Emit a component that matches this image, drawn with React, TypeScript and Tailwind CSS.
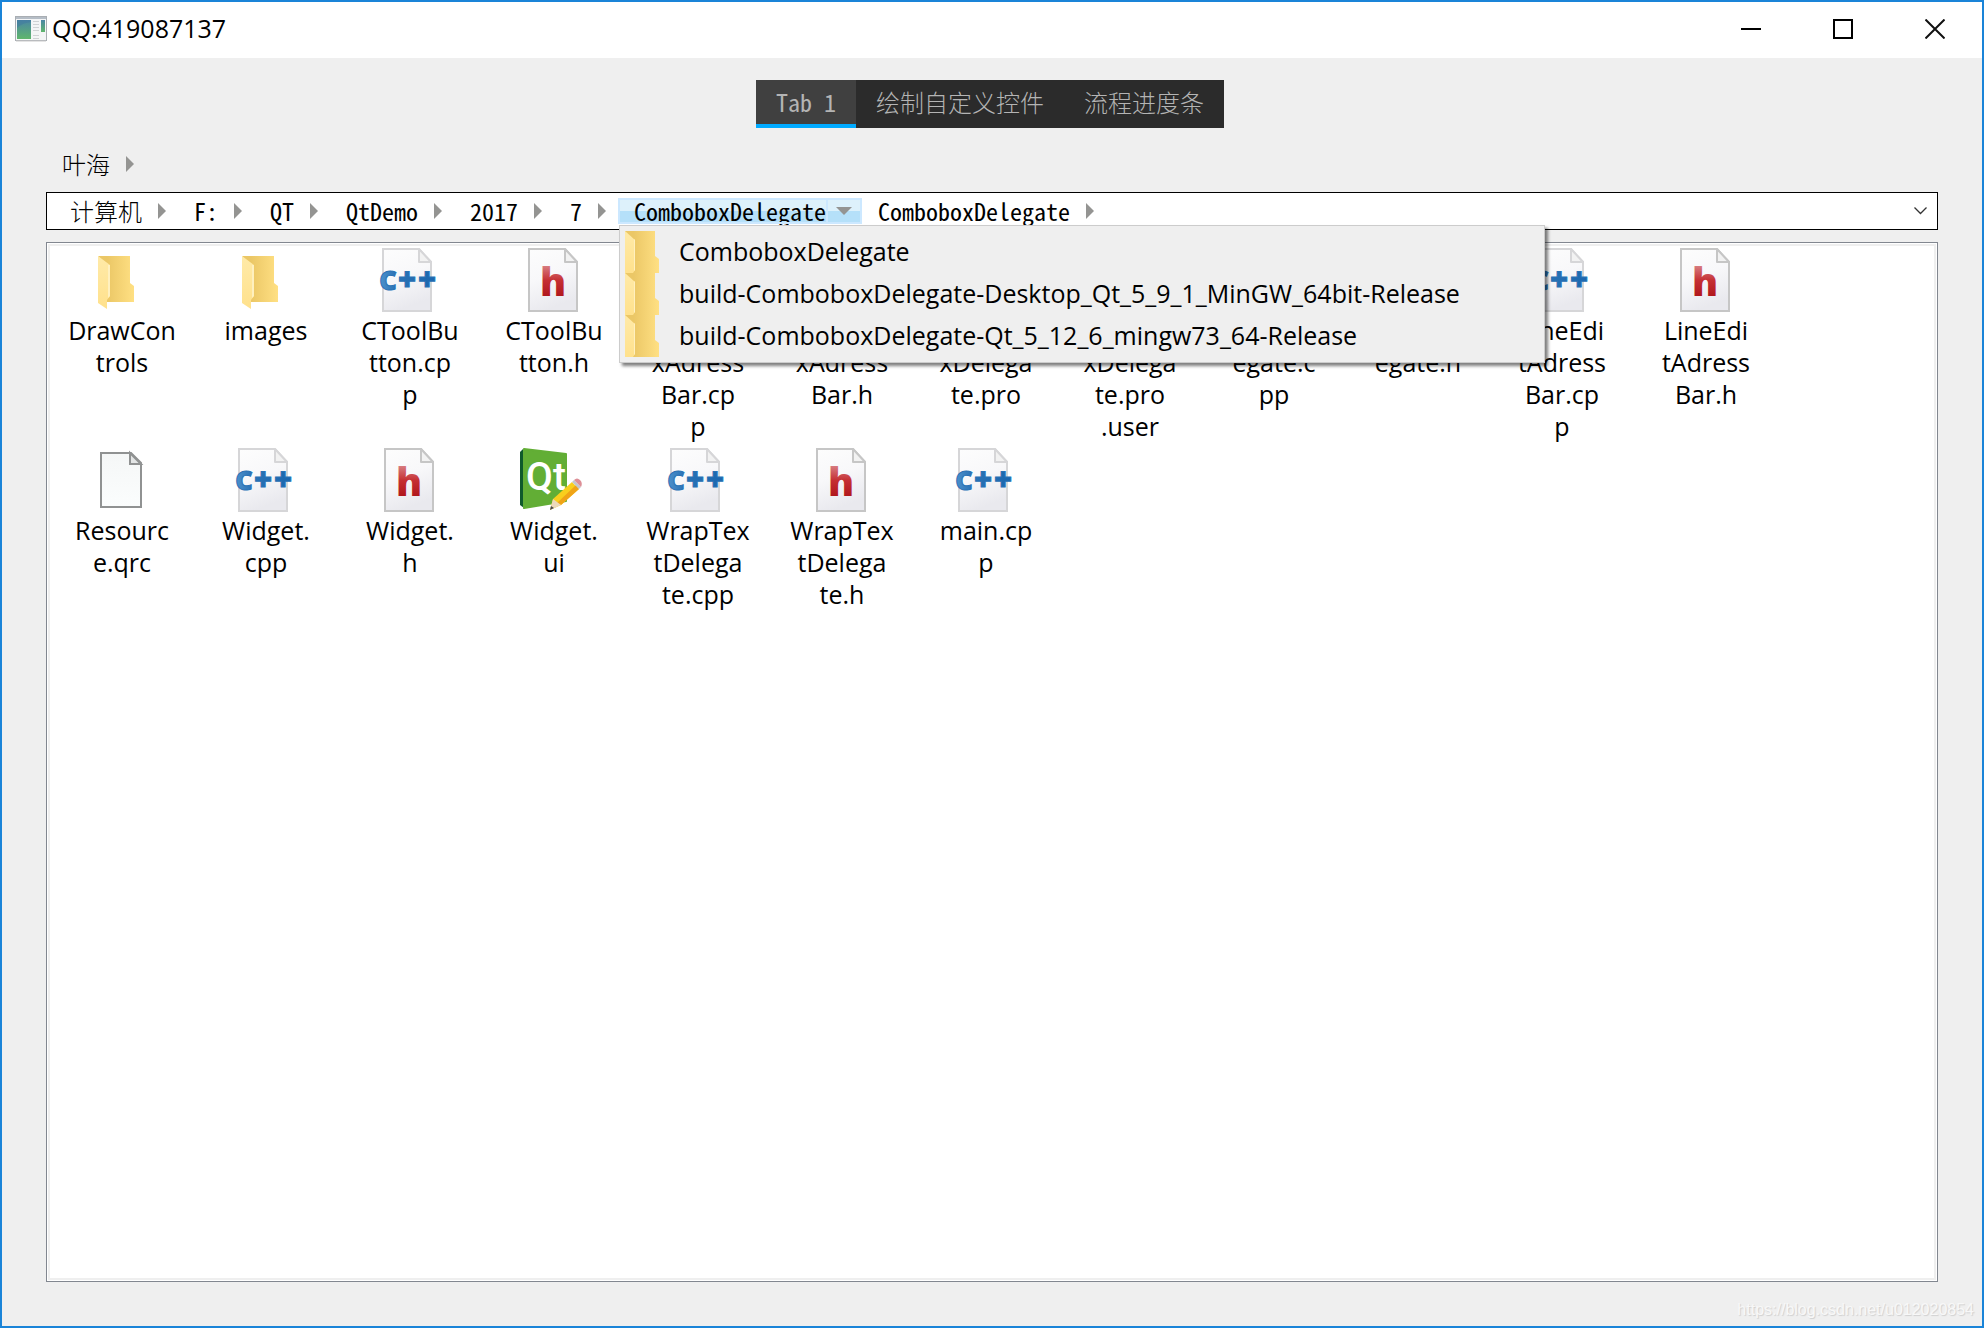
import React, { useState } from 'react';

type FileKind = 'folder' | 'cpp' | 'header' | 'blank' | 'ui';

interface FileEntry {
  kind: FileKind;
  lines: string[];
}

const tabs = ['Tab 1', '绘制自定义控件', '流程进度条'];

const crumbs = ['计算机', 'F:', 'QT', 'QtDemo', '2017', '7', 'ComboboxDelegate', 'ComboboxDelegate'];

const menuItems = [
  'ComboboxDelegate',
  'build-ComboboxDelegate-Desktop_Qt_5_9_1_MinGW_64bit-Release',
  'build-ComboboxDelegate-Qt_5_12_6_mingw73_64-Release',
];

const files: FileEntry[] = [
  { kind: 'folder', lines: ['DrawCon', 'trols'] },
  { kind: 'folder', lines: ['images'] },
  { kind: 'cpp', lines: ['CToolBu', 'tton.cp', 'p'] },
  { kind: 'header', lines: ['CToolBu', 'tton.h'] },
  { kind: 'cpp', lines: ['Combobo', 'xAdress', 'Bar.cp', 'p'] },
  { kind: 'header', lines: ['Combobo', 'xAdress', 'Bar.h'] },
  { kind: 'blank', lines: ['Combobo', 'xDelega', 'te.pro'] },
  { kind: 'blank', lines: ['Combobo', 'xDelega', 'te.pro', '.user'] },
  { kind: 'cpp', lines: ['ItemDel', 'egate.c', 'pp'] },
  { kind: 'header', lines: ['ItemDel', 'egate.h'] },
  { kind: 'cpp', lines: ['LineEdi', 'tAdress', 'Bar.cp', 'p'] },
  { kind: 'header', lines: ['LineEdi', 'tAdress', 'Bar.h'] },
  { kind: 'blank', lines: ['Resourc', 'e.qrc'] },
  { kind: 'cpp', lines: ['Widget.', 'cpp'] },
  { kind: 'header', lines: ['Widget.', 'h'] },
  { kind: 'ui', lines: ['Widget.', 'ui'] },
  { kind: 'cpp', lines: ['WrapTex', 'tDelega', 'te.cpp'] },
  { kind: 'header', lines: ['WrapTex', 'tDelega', 'te.h'] },
  { kind: 'cpp', lines: ['main.cp', 'p'] },
];

// The mono family has no light weight, so Chinese labels use the regular one
const labelFont = (label: string) =>
  /[\u4e00-\u9fff]/.test(label)
    ? "font-['Noto_Sans_CJK_SC',sans-serif]"
    : "font-['Noto_Sans_Mono_CJK_SC',monospace]";

const Gradients = () => (
  <svg width="0" height="0" className="absolute" aria-hidden="true">
    <defs>
      <linearGradient id="paper" x1="0" y1="0" x2="0.3" y2="1">
        <stop offset="0" stopColor="#fdfdfd" />
        <stop offset="0.5" stopColor="#f8f8fa" />
        <stop offset="1" stopColor="#e9e9ee" />
      </linearGradient>
      <linearGradient id="red" x1="0" y1="0" x2="0" y2="1">
        <stop offset="0.2" stopColor="#d98286" />
        <stop offset="0.5" stopColor="#c52f33" />
        <stop offset="0.9" stopColor="#a90f14" />
      </linearGradient>
      <linearGradient id="blue" x1="0" y1="0" x2="1" y2="0">
        <stop offset="0" stopColor="#4f92cc" />
        <stop offset="0.3" stopColor="#2a72b5" />
        <stop offset="1" stopColor="#1b66ae" />
      </linearGradient>
      <linearGradient id="folderBack" x1="0" y1="0" x2="1" y2="0">
        <stop offset="0.25" stopColor="#ebc766" />
        <stop offset="1" stopColor="#ffe083" />
      </linearGradient>
      <linearGradient id="folderFlap" x1="0" y1="0" x2="0" y2="1">
        <stop offset="0" stopColor="#ffeaa8" />
        <stop offset="1" stopColor="#ffe18c" />
      </linearGradient>
      <linearGradient id="blankPaper" x1="0" y1="0" x2="0" y2="1">
        <stop offset="0" stopColor="#f5f7f7" />
        <stop offset="1" stopColor="#fbfdfd" />
      </linearGradient>
      <linearGradient id="appPane" x1="0" y1="0" x2="0" y2="1">
        <stop offset="0" stopColor="#4a86a5" />
        <stop offset="1" stopColor="#5fb66c" />
      </linearGradient>
    </defs>
  </svg>
);

const AppIcon = () => (
  <svg width="32" height="26" viewBox="0 0 32 26" aria-hidden="true">
    <rect x="0.5" y="0.5" width="31" height="24" fill="#f4f5f6" stroke="#a9aeb3" />
    <path d="M1 2h30" stroke="#b5bdc6" strokeWidth="2" />
    <path d="M1 25h30" stroke="#c9c9c9" strokeWidth="1" />
    <rect x="2" y="4" width="14" height="19" fill="url(#appPane)" />
    <path d="M2 12q5-5 14-6V4H2z" fill="#3f789f" opacity="0.5" />
    <path d="M18 5.500h6M18 8.500h6M18 11.500h6M18 14.500h6M18 19.500h6M18 22.500h6" stroke="#cfd2d4" />
    <rect x="26" y="4" width="4" height="12" fill="url(#appPane)" />
  </svg>
);

const Page = ({ stroke }: { stroke: string }) => (
  <>
    <path d="M7 1h36l12 13v49H7z" fill="url(#paper)" stroke={stroke} strokeWidth="2" />
    <path d="M43 1v13h12z" fill="#f2f2f2" stroke={stroke} strokeWidth="2" strokeLinejoin="round" />
  </>
);

const FileIcon = ({ kind }: { kind: FileKind }) => (
  <svg width="64" height="64" viewBox="0 0 64 64" className="overflow-visible" aria-hidden="true">
    {kind === 'folder' && (
      <>
        <path d="M8 8h32v27l4 3v16H17V20z" fill="url(#folderBack)" />
        <path d="M8 8l12 9v31l-3 4v9l-9-6z" fill="url(#folderFlap)" />
        <path d="M20 17v31l-2 2V17z" fill="#fff0bf" />
      </>
    )}
    {kind === 'cpp' && (
      <g transform="translate(-2 0)" fontWeight="800" fontFamily="Open Sans, sans-serif" textAnchor="middle">
        <Page stroke="#d6d6d8" />
        <text y="42" fill="url(#blue)" stroke="#2a72b5" strokeWidth="1">
          <tspan x="12" fontSize="27">C</tspan>
          <tspan x="31" y="43" fontSize="31">+</tspan>
          <tspan x="51" y="43" fontSize="31">+</tspan>
        </text>
      </g>
    )}
    {kind === 'header' && (
      <>
        <Page stroke="#c6c6c6" />
        <text x="31" y="48" textAnchor="middle" fontSize="39" fontWeight="800" fontFamily="Open Sans, sans-serif" fill="url(#red)">
          h
        </text>
      </>
    )}
    {kind === 'blank' && (
      <>
        <path d="M11 5h30l10 10v44H11z" fill="url(#blankPaper)" stroke="#909292" strokeWidth="2" />
        <path d="M40 5v11h11z" fill="#e3e5e5" stroke="#909292" strokeWidth="2" />
      </>
    )}
    {kind === 'ui' && (
      <>
        <path d="M1 1l-3 3v53l4 3z" fill="#0f5a2c" />
        <path d="M2 1l42 5v47L2 60z" fill="#62ae35" stroke="#62ae35" strokeWidth="2" strokeLinejoin="round" />
        <text x="24" y="42" textAnchor="middle" fontSize="40" fontFamily="DejaVu Sans Condensed, Roboto, sans-serif" fontWeight="500" fill="#fff">
          <tspan fontFamily="Roboto, sans-serif" fontSize="39">Qt</tspan>
        </text>
        <path d="M28 62l3-11 19-17 7 7-18 16z" fill="#f9cf1d" />
        <path d="M35 55l19-18 3 4-18 16z" fill="#f0a417" />
        <path d="M28 62l3-11 8 6z" fill="#ecd9bb" />
        <path d="M28 62l1-4 3 2z" fill="#4c4c4c" />
        <path d="M50 34l2-2 7 7-2 2z" fill="#c3c7cc" />
        <path d="M52 32q3-3 6 0t1 7z" fill="#dd8f97" />
      </>
    )}
  </svg>
);

// Folder as it shows in a menu row, cut off at the top and bottom edge
const MenuFolderIcon = () => (
  <svg width="34" height="42" viewBox="0 0 34 42" aria-hidden="true">
    <path d="M0 0h30v25l4 3v14H0z" fill="url(#folderBack)" />
    <path d="M0 0l10 9v30l-2 3H0z" fill="url(#folderFlap)" />
    <path d="M10 9v30l-1 1V8z" fill="#fff0bf" />
  </svg>
);

const Crumb = ({ label, open = false, children }: { label: string; open?: boolean; children?: React.ReactNode }) => (
  <div
    className={`relative flex h-[26px] ${
      open ? 'bg-linear-to-b from-[#ddf1fb] from-50% to-[#b5e0f9] to-50% outline-2 -outline-offset-2 outline-[#cce8ff]' : ''
    }`}
  >
    <button type="button" className={`pl-4 text-2xl leading-[26px] font-light whitespace-nowrap ${labelFont(label)}`}>
      {label}
    </button>
    <button
      type="button"
      aria-label={`${label} subfolders`}
      aria-expanded={open}
      className={`flex w-9 items-center ${open ? 'border-l-2 border-[#cce8ff] pl-2' : 'pl-4'}`}
    >
      {open ? (
        <svg width="16" height="8" viewBox="0 0 16 8" fill="#949492">
          <path d="M0 0h16L8 8z" />
        </svg>
      ) : (
        <svg width="8" height="16" viewBox="0 0 8 16" fill="#949492">
          <path d="M0 0l8 8-8 8z" />
        </svg>
      )}
    </button>
    {children}
  </div>
);

const FolderMenu = () => (
  <ul className="absolute top-[27px] left-px z-10 w-[926px] border border-[#ccc] bg-[#efefef] p-[5px] shadow-[3px_3px_3px_rgba(0,0,0,0.5)]">
    {menuItems.map((item) => (
      <li key={item}>
        <button type="button" className="flex h-[42px] w-full items-center gap-5 text-[25px] whitespace-nowrap hover:bg-[#90c8f6]">
          <MenuFolderIcon />
          <span>{item}</span>
        </button>
      </li>
    ))}
  </ul>
);

const TitleBar = () => (
  <header className="flex h-14 items-center bg-white pr-px pb-0.5 pl-[13px]">
    <AppIcon />
    <h1 className="ml-[5px] flex-1 text-[25px]">QQ:419087137</h1>
    <button type="button" aria-label="Minimize" className="flex h-full w-[92px] items-center justify-center">
      <svg width="20" height="20" viewBox="0 0 20 20">
        <path d="M0 10h20" stroke="#000" strokeWidth="2" />
      </svg>
    </button>
    <button type="button" aria-label="Maximize" className="flex h-full w-[92px] items-center justify-center">
      <svg width="20" height="20" viewBox="0 0 20 20">
        <rect x="1" y="1" width="18" height="18" fill="none" stroke="#000" strokeWidth="2" />
      </svg>
    </button>
    <button type="button" aria-label="Close" className="flex h-full w-[92px] items-center justify-center">
      <svg width="20" height="20" viewBox="0 0 20 20">
        <path d="M0.500 0.500l19 19M19.500 0.500l-19 19" stroke="#111" strokeWidth="2" />
      </svg>
    </button>
  </header>
);

const App = () => {
  const [activeTab, setActiveTab] = useState(0);

  return (
    <div className="flex min-h-screen flex-col border-2 border-[#1a84d8] bg-[#efefef] font-['Open_Sans','Noto_Sans_CJK_SC',sans-serif] text-black">
      <Gradients />
      <TitleBar />

      <main className="flex flex-1 flex-col px-11">
        {/* Tabs */}
        <div role="tablist" className="mt-[22px] mr-1 flex self-center bg-[#2b2b2b]">
          {tabs.map((tab, index) => (
            <button
              key={tab}
              type="button"
              role="tab"
              aria-selected={activeTab === index}
              onClick={() => setActiveTab(index)}
              className={`h-12 border-b-4 px-5 text-2xl font-light whitespace-nowrap text-[#b4b4b4] ${labelFont(tab)} ${
                activeTab === index ? 'border-[#00aaff] bg-[#404040]' : 'border-transparent'
              }`}
            >
              {tab}
            </button>
          ))}
        </div>

        {/* Standalone breadcrumb */}
        <nav aria-label="Breadcrumb" className="mt-[23px] flex">
          <Crumb label="叶海" />
        </nav>

        {/* Address bar */}
        <nav aria-label="Address" className="mt-[15px] flex h-[38px] items-center border border-black bg-white pr-2.5 pl-[7px]">
          {crumbs.map((crumb, index) => (
            <Crumb key={index} label={crumb} open={index === 6}>
              {index === 6 && <FolderMenu />}
            </Crumb>
          ))}
          <button type="button" aria-label="History" className="ml-auto">
            <svg width="13" height="8" viewBox="0 0 13 8" fill="none" stroke="#333" strokeWidth="1.300">
              <path d="M0.500 0.500l6 6 6-6" />
            </svg>
          </button>
        </nav>

        {/* File view */}
        <section aria-label="Files" className="mt-3 flex flex-1 flex-col border border-[#828790] bg-white p-px">
          <ul className="grid flex-1 auto-rows-[200px] grid-cols-[repeat(auto-fill,144px)] border-2 border-[#efefef] pr-20">
            {files.map((file) => (
              <li key={file.lines.join('')} className="flex flex-col items-center gap-0.5 pt-0.5">
                <FileIcon kind={file.kind} />
                <p className="text-center text-[25px] leading-8">
                  {file.lines.map((line) => (
                    <span key={line} className="block">
                      {line}
                    </span>
                  ))}
                </p>
              </li>
            ))}
          </ul>
        </section>
      </main>

      <footer className="flex h-11 items-center justify-end pt-3 pr-2 font-['Liberation_Sans',sans-serif] text-base text-[#f8f8f8] [text-shadow:1px_1px_1px_#cfcfcf]">
        https://blog.csdn.net/u012020854
      </footer>
    </div>
  );
};

export default App;
